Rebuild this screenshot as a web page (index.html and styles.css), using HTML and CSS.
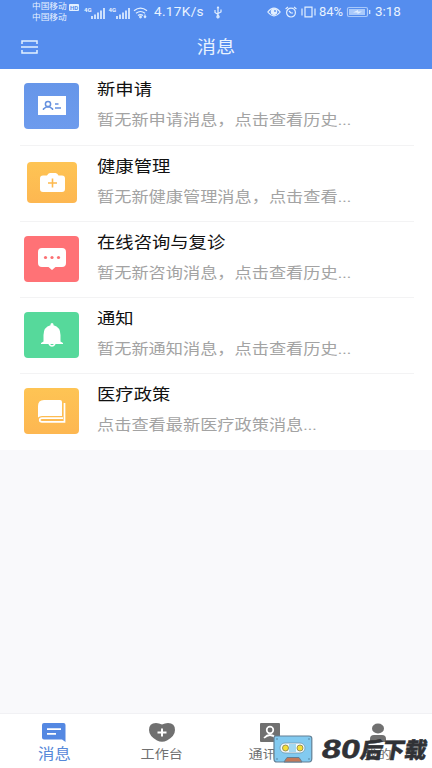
FILE: index.html
```html
<!DOCTYPE html>
<html lang="zh-CN">
<head>
<meta charset="utf-8">
<title>消息</title>
<link rel="stylesheet" href="styles.css">
</head>
<body>
<div class="app">
  <header class="header">
    <div class="status">
      <div class="carriers">
        <div class="carrier"><span>中国移动</span><b class="hd">HD</b></div>
        <div class="carrier"><span>中国移动</span></div>
      </div>
      <div class="signal"><span class="gen">4G</span><svg width="14" height="11" viewBox="0 0 14 11"><path d="M1 8v3M4 6.5V11M7 4.5V11M10 2.5V11M13 0v11"/></svg></div>
      <div class="signal second"><span class="gen">4G</span><svg width="14" height="11" viewBox="0 0 14 11"><path d="M1 8v3M4 6.5V11M7 4.5V11M10 2.5V11M13 0v11"/></svg></div>
      <svg class="wifi" width="15" height="11" viewBox="0 0 15 11"><path d="M1 3.8Q7.5-1.5 14 3.8M3 6.3q4.5-3.6 9 0M5 8.6q2.5-1.9 5 0"/><circle cx="7.5" cy="10" r=".8"/><path d="M12 7.5v3M10.8 9.4 12 10.6l1.2-1.2"/></svg>
      <span class="speed">4.17K/s</span>
      <svg class="usb" width="8" height="12" viewBox="0 0 8 12"><path d="M4 1v10M1 4v2.5l3 2M7 3.5V6L4 7.5"/><path d="m4 0 1.5 2.3h-3z" class="solid"/><circle cx="4" cy="10.7" r="1.1"/></svg>
      <svg class="eye" width="14" height="10" viewBox="0 0 14 10"><path d="M.8 5Q7-2.8 13.2 5 7 12.8.8 5Z"/><circle cx="7" cy="4.8" r="2.7"/><circle cx="8" cy="4" r=".9" class="pupil"/></svg>
      <svg class="alarm" width="12" height="12" viewBox="0 0 12 12"><circle cx="6" cy="6.6" r="4.4" class="line"/><path d="M.6 3 3 1M11.4 3 9 1M4 5l2 2h2"/></svg>
      <svg class="vibrate" width="15" height="12" viewBox="0 0 15 12"><path d="M4 1.2h7v9.6H4zM1 2.5v7M14 2.5v7"/></svg>
      <span class="percent">84%</span>
      <svg class="battery" width="24" height="10" viewBox="0 0 24 10"><rect x=".5" y=".5" width="20" height="9" rx="1.5" class="case"/><rect x="2" y="2" width="16" height="6" class="charge"/><path d="M6 5.5 11 3v1.5h4L10.5 7V5.5z" class="solid"/><path d="M22.7 3v4"/></svg>
      <span class="clock">3:18</span>
    </div>
    <div class="titlebar">
      <svg class="scan" width="17" height="14" viewBox="0 0 17 14"><path d="M1 4V1h15v3M1 10v3h15v-3M0 7h17"/></svg>
      <h1>消息</h1>
    </div>
  </header>

  <main class="list">
    <article class="row">
      <div class="icon blue"><svg width="28" height="19" viewBox="0 0 28 19"><path fill="#fff" d="M0 0h28v19H0z"/><g fill="none" stroke="#6490df" stroke-width="1.5"><circle cx="10" cy="8" r="2.6"/><path d="M5.500 14v-1l2.800-2h3.400l2.800 2v1M17 8h3.500M17 12h6"/></g></svg></div>
      <div class="copy"><h2>新申请</h2><p>暂无新申请消息，点击查看历史...</p></div>
    </article>
    <article class="row">
      <div class="icon orange small"><svg width="25" height="19" viewBox="0 0 25 19"><path fill="#fff" d="M3 2.500h4Q8 0 10 0h5.500q2 0 3 2.500H22q3 0 3 3V16q0 3-3 3H3q-3 0-3-3V5.500q0-3 3-3Z"/><path d="M8 10h9M12.500 5.500v9" stroke="#fdb94e" stroke-width="1.600"/></svg></div>
      <div class="copy"><h2>健康管理</h2><p>暂无新健康管理消息，点击查看...</p></div>
    </article>
    <article class="row">
      <div class="icon red"><svg width="28" height="22" viewBox="0 0 28 22"><path fill="#fff" d="M4 0h20q4 0 4 4v11q0 4-4 4h-6.500L14 22l-3.500-3H4q-4 0-4-4V4q0-4 4-4Z"/><g fill="#fb7073"><circle cx="7.500" cy="9.500" r="1.600"/><circle cx="14" cy="9.500" r="1.600"/><circle cx="20.500" cy="9.500" r="1.600"/></g></svg></div>
      <div class="copy"><h2>在线咨询与复诊</h2><p>暂无新咨询消息，点击查看历史...</p></div>
    </article>
    <article class="row">
      <div class="icon green"><svg width="22" height="24" viewBox="0 0 22 24"><path fill="#fff" d="M9.500 2.200V1.500a1.500 1.500 0 0 1 3 0v.7Q19.500 4 19.500 12v6.500l2.500 1.500v1H0v-1l2.500-1.500V12q0-8 7-9.800Z"/><path d="M8 21q3 4 6 0" fill="none" stroke="#fff" stroke-width="1.500"/></svg></div>
      <div class="copy"><h2>通知</h2><p>暂无新通知消息，点击查看历史...</p></div>
    </article>
    <article class="row">
      <div class="icon orange"><svg width="28" height="23" viewBox="0 0 28 23"><path fill="#fff" d="M6 0h16q2 0 2 2v14H4q-2.500 0-4 1.500V6q0-6 6-6Z"/><path d="M25 18.200H4q-2.300 0-2.300 1.800T4 21.900h22.500V3" fill="none" stroke="#fff" stroke-width="1.700"/></svg></div>
      <div class="copy"><h2>医疗政策</h2><p>点击查看最新医疗政策消息...</p></div>
    </article>
  </main>

  <nav class="tabs">
    <div class="tab active"><svg width="24" height="19" viewBox="0 0 24 19"><path d="M2 0h19.500Q23.500 0 23.500 2v17L20 16.500H2q-2 0-2-2V2Q0 0 2 0Z"/><path d="M5 6.200h14M5 10.800h9" stroke="#fff" stroke-width="1.800"/></svg><span>消息</span></div>
    <div class="tab"><svg width="26" height="19" viewBox="0 0 26 19"><path d="M13 1.500Q16 0 19 0q7 0 7 7 0 6-8 10.500-5 2.700-10 0Q0 13 0 7q0-7 7-7 3 0 6 1.500Z"/><path d="M8.500 9.500h9M13 5.500v8" stroke="#fff" stroke-width="2"/></svg><span>工作台</span></div>
    <div class="tab"><svg width="20" height="19" viewBox="0 0 20 19"><rect width="20" height="19" rx="1"/><circle cx="10" cy="7" r="3.300" fill="none" stroke="#fff" stroke-width="1.700"/><path d="M4 15q6-6 12 0" fill="none" stroke="#fff" stroke-width="1.700"/></svg><span>通讯录</span></div>
    <div class="tab"><svg width="18" height="19" viewBox="0 0 18 19"><ellipse cx="9" cy="5.500" rx="6" ry="5"/><path d="M1 19v-3q0-4 4-4h8q4 0 4 4v3z"/></svg><span>我的</span></div>
  </nav>

  <div class="watermark">
    <svg width="40" height="28" viewBox="0 0 40 28"><path d="M2.500 1H36q2.800 0 2.800 2.500v20Q38.800 27 36 27H4q-3 0-3-3V3.500Q1 1 2.500 1Z" fill="#82caf0" stroke="#627f94" stroke-width="1.200"/><rect x="7" y="8" width="25" height="10" rx="5" fill="#f4fafc" stroke="#7298ad" stroke-width=".8"/><rect x="16" y="9" width="7" height="8" fill="#a3d8f1"/><g fill="#f5df37" stroke="#807c4e" stroke-width=".8"><circle cx="12.500" cy="13" r="3"/><circle cx="27" cy="13" r="3"/></g><path d="M11 27l3-4.500h12l3 4.500z" fill="#c47858" stroke="#627f94"/><g fill="#466e85"><circle cx="4" cy="4" r=".7"/><circle cx="36" cy="4" r=".7"/><circle cx="4" cy="24" r=".7"/><circle cx="36" cy="24" r=".7"/></g></svg>
    <span class="brand"><span class="digits">80</span><span class="hanzi">后下载</span></span>
  </div>
</div>
</body>
</html>
```
FILE: styles.css
```css
* { box-sizing: border-box; }
body { margin: 0; font-family: Roboto, "Noto Sans CJK SC", sans-serif; }
h1, h2, p { margin: 0; font-weight: 400; }
svg { display: block; flex: none; overflow: visible; }
.app { position: relative; width: 432px; height: 768px; display: flex; flex-direction: column; background: #f9f9fb; overflow: hidden; }

.header { height: 69px; background: #558dee; color: #e9f3ff; flex: none; }
.status { height: 24px; display: flex; align-items: center; padding-left: 32px; white-space: nowrap; }
.status svg { fill: none; stroke: #e2efff; stroke-width: 1.2; }
.status .solid { fill: #e2efff; stroke: none; }
.carriers { width: 52px; padding-top: 1px; }
.carrier { display: flex; height: 10.5px; align-items: center; font-size: 8px; line-height: 10px; }
.carrier span { width: 35px; transform: scaleX(1.08); transform-origin: left; }
.hd { font-size: 6px; line-height: 7px; height: 7px; padding: 0 1px; margin-left: 2px; background: #e2efff; color: #558dee; border-radius: 1px; }
.signal { display: flex; align-items: flex-end; width: 20px; height: 12px; margin-top: 1px; }
.signal svg { stroke-width: 1.7; }
.signal.second { margin-left: 4.5px; }
.gen { width: 7px; font-size: 6px; line-height: 6px; align-self: flex-start; font-weight: 700; }
.wifi { margin-left: 4px; }
.speed, .percent, .clock { font-size: 12px; transform-origin: left; transform: scaleX(1.13); }
.speed { margin-left: 6px; width: 50px; letter-spacing: .3px; }
.usb { margin-left: 10px; }
.eye { margin-left: 45px; }
.eye circle { fill: #e2efff; }
.eye .pupil { fill: #558dee; stroke: none; }
.alarm { margin-left: 4px; }
.vibrate { margin-left: 4.5px; }
.percent { margin-left: 3px; width: 26px; transform: scaleX(1.08); }
.battery { margin-left: 2px; }
.battery .case { stroke: #a9c9fb; }
.battery .charge { fill: #a9c9fb; stroke: none; }
.clock { margin-left: 4px; transform: scaleX(1.12); }
.titlebar { height: 45px; display: grid; grid-template-columns: 60px 1fr 60px; align-items: center; }
.scan { margin-left: 21px; fill: none; stroke: #e2f1ff; stroke-width: 1.5; }
h1 { text-align: center; font-size: 17px; line-height: 24px; transform: scaleX(1.13); }

.list { background: #fff; height: 380.5px; flex: none; }
.row { position: relative; height: 76.1px; display: flex; align-items: flex-start; padding: 15px 0 0 24px; }
.row:first-child { padding-top: 14px; }
.row + .row::before { content: ""; position: absolute; left: 20px; right: 18px; top: 0; height: 1px; background: #f3f3f4; }
.icon { width: 55px; height: 45.5px; border-radius: 4px; display: grid; place-items: center; flex: none; }
.icon.small { width: 50px; height: 41px; margin: 2px 2px 0 3px; }
.blue { background: linear-gradient(#6696e9, #6d9bed); }
.orange { background: linear-gradient(#fec454, #fdb751); }
.red { background: #ff7276; }
.green { background: #56d99b; }
.copy { margin-left: 17.5px; margin-top: -5px; white-space: nowrap; }
.row h2 { font-size: 16px; line-height: 24px; color: #111; transform: scaleX(1.145); transform-origin: left; }
.row p { margin-top: 6px; font-size: 15px; line-height: 24px; color: #a3a3a3; transform: scaleX(1.146); transform-origin: left; }

.tabs { margin-top: auto; height: 55px; display: grid; grid-template-columns: repeat(4, 1fr); background: #fff; border-top: 1px solid #f1f1f4; }
.tab { display: flex; flex-direction: column; align-items: center; padding-top: 9px; color: #707070; fill: #707070; }
.tab span { height: 20px; margin-top: 2px; font-size: 12.5px; line-height: 22px; transform: scaleX(1.13); }
.tab.active { color: #5789d9; fill: #5488e2; }
.tab.active span { font-size: 14.5px; line-height: 21px; }

.watermark { position: absolute; left: 273px; top: 735px; width: 159px; height: 28px; display: flex; align-items: center; color: #303236; }
.brand { display: flex; align-items: center; margin-left: 9px; width: 106px; height: 24px; transform: skewX(-10deg); font-weight: 900; -webkit-text-stroke: .5px #303236; white-space: nowrap; }
.digits { width: 39px; font: 900 26px/24px "Liberation Sans", sans-serif; transform: scaleX(1.33); transform-origin: left; }
.hanzi { width: 67px; font: 900 22px/24px "Noto Sans CJK SC", sans-serif; margin-top: -3px; }
```
